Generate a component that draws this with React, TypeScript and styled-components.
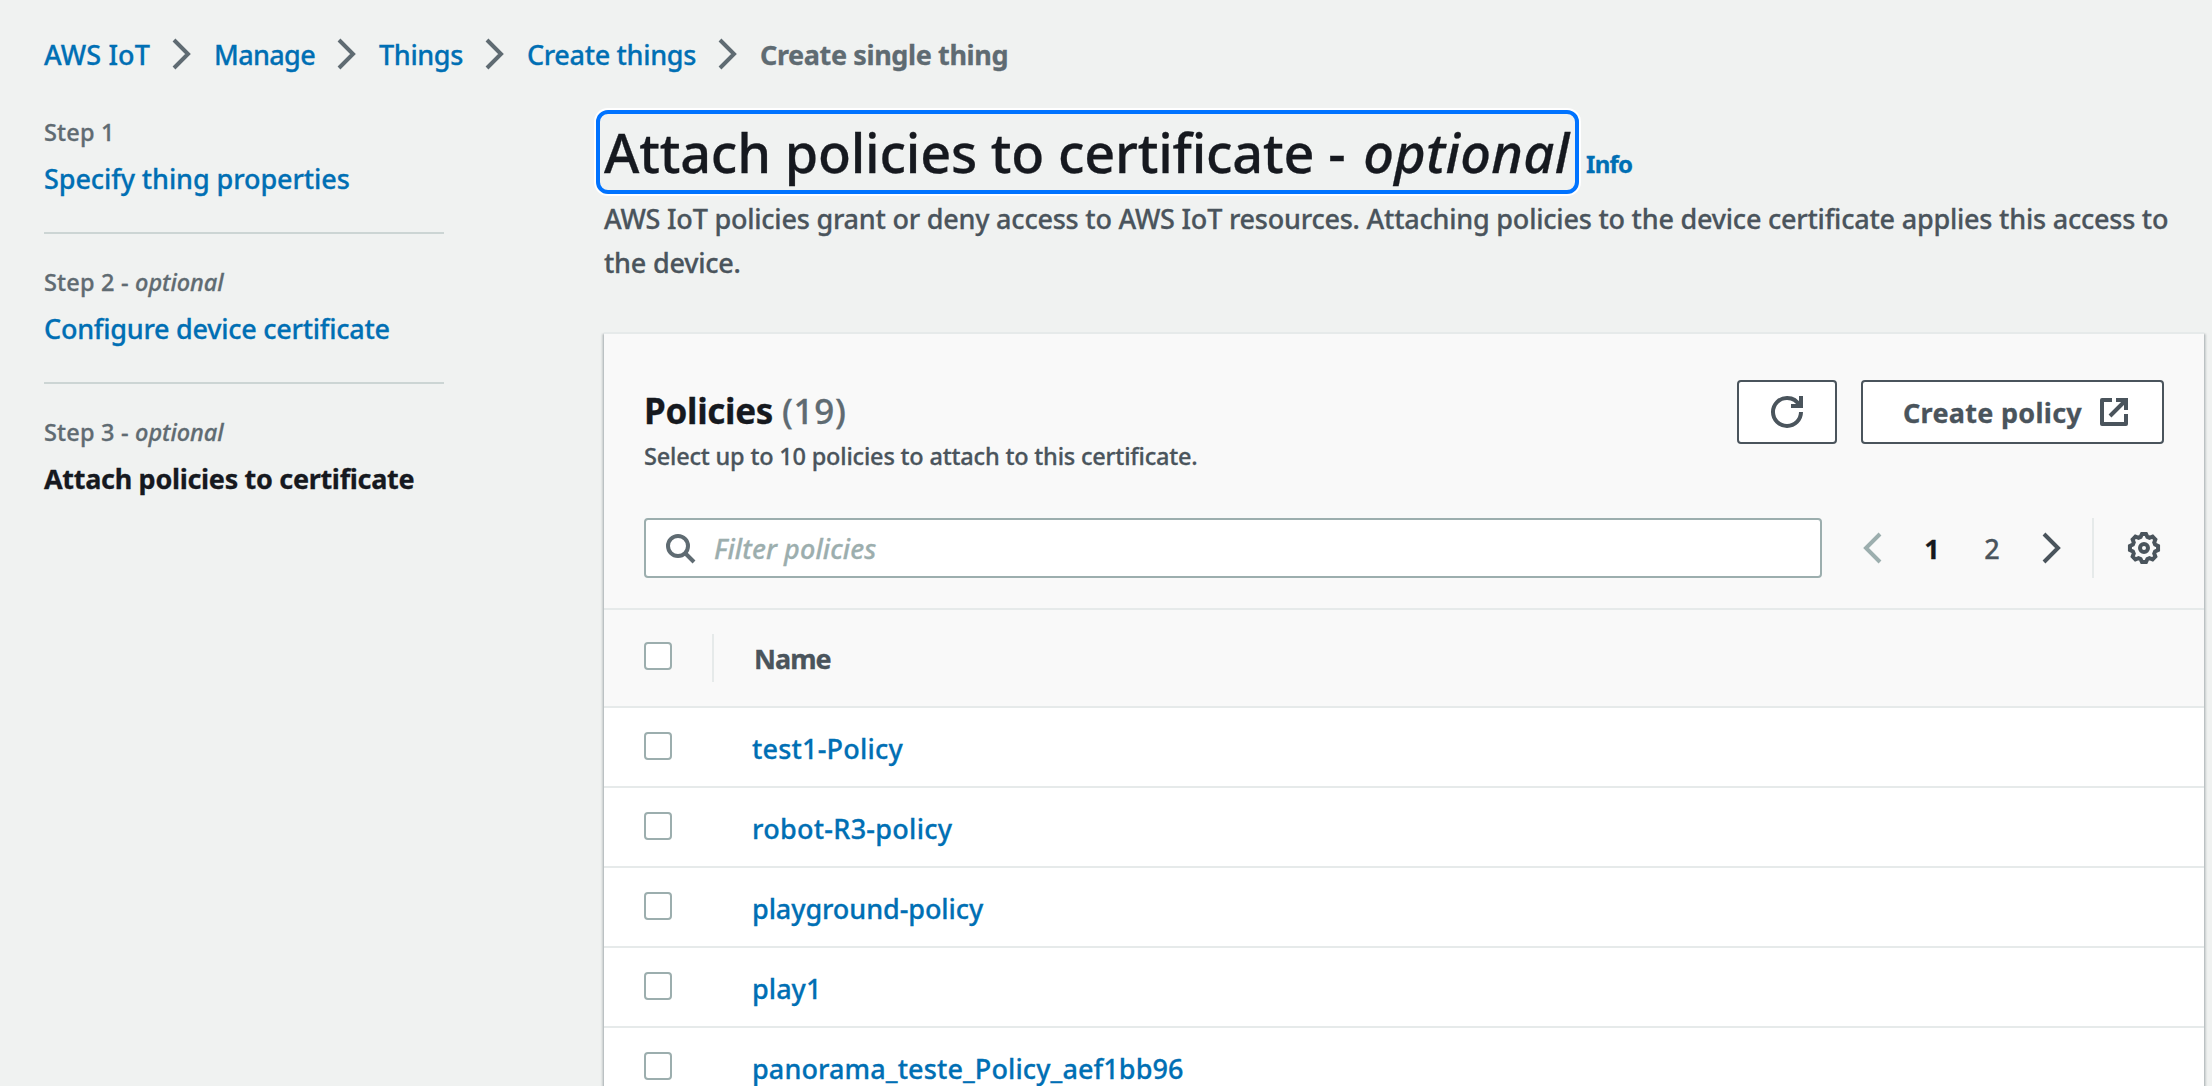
import React from 'react';
import styled, { createGlobalStyle } from 'styled-components';

const color = {
  page: '#f0f2f1',
  link: '#006fb4',
  ink: '#16191f',
  body: '#4a545c',
  muted: '#5f6b72',
  field: '#9caeae',
  line: '#e6eaea',
  rule: '#ccd5d4',
  panel: '#f9f9f9',
  focus: '#0073ff',
};

const GlobalStyle = createGlobalStyle`
  *, *::before, *::after { box-sizing: border-box; }
  body {
    margin: 0;
    background: ${color.page};
    color: ${color.body};
    font-family: "Noto Sans", "Open Sans", sans-serif;
    font-size: 27px;
    font-weight: 500;
    line-height: 44px;
    -webkit-text-stroke: 0.3px currentColor;
  }
  a { text-decoration: none; }
  h1, h2, p, ol { margin: 0; padding: 0; }
`;

type Tracking = { $track?: number };

const Page = styled.div`
  height: 1086px;
  overflow: hidden;
  padding: 32px 8px 0 44px;
`;

const Breadcrumbs = styled.nav`
  display: flex;
  align-items: center;
  gap: 16px;
  height: 44px;
  white-space: nowrap;
`;

const Link = styled.a<Tracking>`
  padding-top: 2px;
  color: ${color.link};
  letter-spacing: ${(p) => p.$track ?? 0}px;
  white-space: nowrap;
`;

const CurrentCrumb = styled.span`
  padding-top: 2px;
  color: ${color.muted};
  font-weight: 700;
  letter-spacing: -0.38px;
`;

const Icon = styled.svg<{ $color?: string }>`
  flex: none;
  display: block;
  width: 32px;
  height: 32px;
  overflow: visible;
  fill: none;
  stroke: ${(p) => p.$color ?? color.body};
  stroke-width: 2;
`;

const Layout = styled.div`
  display: grid;
  grid-template-columns: 400px 1600px;
  column-gap: 160px;
  margin-top: 34px;
`;

const Steps = styled.ol`
  list-style: none;
  padding-top: 4px;
`;

const Step = styled.li`
  display: flex;
  flex-direction: column;
  gap: 5px;
  padding-bottom: 31px;

  & + & {
    border-top: 2px solid ${color.rule};
    padding-top: 30px;
  }
`;

const StepLabel = styled.span`
  color: ${color.muted};
  font-size: 23.5px;
  line-height: 36px;
  letter-spacing: 0.2px;

  em { letter-spacing: -0.05px; }
`;

const CurrentStep = styled.span`
  padding-top: 2px;
  color: ${color.ink};
  font-weight: 700;
  letter-spacing: -0.31px;
  white-space: nowrap;
`;

const TitleRow = styled.div`
  display: flex;
  align-items: baseline;
  gap: 7px;
  margin-left: -8px;
`;

const Title = styled.h1`
  width: 983px;
  height: 84px;
  padding: 0 4px;
  border: 4px solid ${color.focus};
  border-radius: 12px;
  box-shadow: 0 0 0 2px #fff;
  color: ${color.ink};
  font-size: 54px;
  font-weight: 470;
  line-height: 76px;
  letter-spacing: -0.2px;
  white-space: nowrap;

  em {
    margin-left: 4px;
    letter-spacing: 0.3px;
  }
`;

const InfoLink = styled.a`
  color: ${color.link};
  font-size: 24px;
  font-weight: 700;
  letter-spacing: -0.7px;
`;

const Description = styled.p`
  padding-top: 3px;
  letter-spacing: -0.218px;
`;

const Panel = styled.section`
  margin-top: 47px;
  height: 800px;
  border-top: 2px solid ${color.line};
  background: #fff;
  box-shadow:
    0 2px 2px 0 rgba(0, 28, 36, 0.3),
    2px 2px 2px 0 rgba(0, 28, 36, 0.15),
    -2px 2px 2px 0 rgba(0, 28, 36, 0.15);
`;

const PanelHeader = styled.header`
  padding: 46px 40px 30px;
  border-bottom: 2px solid ${color.line};
  background: ${color.panel};
`;

const HeadingRow = styled.div`
  display: flex;
  justify-content: space-between;
  align-items: flex-start;
`;

const HeadingText = styled.div`
  padding-top: 9px;
`;

const Heading = styled.h2`
  color: ${color.ink};
  font-size: 35px;
  font-weight: 700;
  line-height: 44px;
  letter-spacing: -0.3px;
`;

const Count = styled.span`
  color: ${color.muted};
  font-weight: 500;
  letter-spacing: 0.7px;
`;

const SubHeading = styled.p`
  margin-top: 5px;
  font-size: 23.5px;
  line-height: 36px;
  letter-spacing: -0.19px;
`;

const Actions = styled.div`
  display: flex;
  gap: 24px;
`;

const Button = styled.button<{ $wide?: boolean }>`
  display: flex;
  align-items: center;
  justify-content: ${(p) => (p.$wide ? 'flex-start' : 'center')};
  gap: 16px;
  width: ${(p) => (p.$wide ? 303 : 100)}px;
  height: 64px;
  padding: ${(p) => (p.$wide ? '0 0 0 40px' : '0')};
  border: 2px solid ${color.body};
  border-radius: 4px;
  background: #fff;
  color: ${color.body};
  font: inherit;
  font-weight: 700;
  letter-spacing: 0.28px;
  white-space: nowrap;
`;

const ButtonLabel = styled.span`
  padding-top: 2px;
`;

const Toolbar = styled.div`
  display: flex;
  align-items: center;
  height: 60px;
  margin-top: 44px;
`;

const SearchBox = styled.label`
  display: flex;
  align-items: center;
  gap: 18px;
  width: 1178px;
  height: 60px;
  padding-left: 18px;
  border: 2px solid ${color.field};
  border-radius: 4px;
  background: #fff;
`;

const SearchInput = styled.input`
  flex: 1;
  min-width: 0;
  height: 44px;
  padding: 1px 0 0;
  border: 0;
  outline: 0;
  background: transparent;
  font: inherit;

  &::placeholder {
    color: ${color.field};
    font-style: italic;
    font-weight: 500;
    letter-spacing: 0.1px;
    opacity: 1;
  }
`;

const Pagination = styled.div`
  display: flex;
  margin-left: 20px;
`;

const PageArrow = styled.span`
  display: flex;
  align-items: center;
  justify-content: center;
  width: 60px;
  height: 44px;
`;

const PageNumber = styled(PageArrow)<{ $current?: boolean }>`
  padding-top: 2px;
  color: ${(p) => (p.$current ? color.ink : color.body)};
  font-weight: ${(p) => (p.$current ? 700 : 500)};
`;

const Preferences = styled.div`
  display: flex;
  align-items: center;
  height: 60px;
  margin-left: 10px;
  padding-left: 34px;
  border-left: 2px solid ${color.line};
`;

const ColumnHeader = styled.div`
  display: flex;
  align-items: flex-start;
  height: 98px;
  padding: 24px 40px 0;
  border-bottom: 2px solid ${color.line};
  background: ${color.panel};
`;

const ColumnName = styled.div`
  height: 48px;
  margin-left: 40px;
  padding: 3px 0 0 40px;
  border-left: 2px solid ${color.line};
  font-weight: 700;
  letter-spacing: -0.95px;
`;

const Row = styled.div`
  display: flex;
  align-items: flex-start;
  gap: 80px;
  height: 80px;
  padding: 17px 40px 0;
  border-bottom: 2px solid ${color.line};
`;

const Checkbox = styled.span<{ $offset: number }>`
  flex: none;
  width: 28px;
  height: 28px;
  margin-top: ${(p) => p.$offset}px;
  border: 2px solid ${color.field};
  border-radius: 4px;
  background: #fff;
`;

const Chevron = () => (
  <Icon viewBox="0 0 16 16" $color={color.muted}>
    <path d="m4 1 7 7-7 7" />
  </Icon>
);

const GEAR_POINTS = Array.from({ length: 8 }, (_, i) => i * 45)
  .flatMap((a) => [
    [a - 8, 7.1],
    [a + 8, 7.1],
    [a + 17, 5.8],
    [a + 28, 5.8],
  ])
  .map(([deg, r]) => {
    const t = (deg * Math.PI) / 180;
    return `${(8 + r * Math.cos(t)).toFixed(2)},${(8 + r * Math.sin(t)).toFixed(2)}`;
  })
  .join(' ');

const crumbs = [
  { label: 'AWS IoT', track: 0.13 },
  { label: 'Manage', track: -0.64 },
  { label: 'Things', track: -0.38 },
  { label: 'Create things', track: -0.32 },
];

const policies = [
  { name: 'test1-Policy', track: 0.2 },
  { name: 'robot-R3-policy', track: 0.28 },
  { name: 'playground-policy', track: -0.08 },
  { name: 'play1', track: 0.05 },
  { name: 'panorama_teste_Policy_aef1bb96', track: 0.11 },
];

export default function App() {
  return (
    <>
      <GlobalStyle />
      <Page>
        <Breadcrumbs>
          {crumbs.map((c) => (
            <React.Fragment key={c.label}>
              <Link $track={c.track}>{c.label}</Link>
              <Chevron />
            </React.Fragment>
          ))}
          <CurrentCrumb>Create single thing</CurrentCrumb>
        </Breadcrumbs>

        <Layout>
          <Steps>
            <Step>
              <StepLabel>Step 1</StepLabel>
              <Link $track={-0.09}>Specify thing properties</Link>
            </Step>
            <Step>
              <StepLabel>Step 2 - <em>optional</em></StepLabel>
              <Link $track={-0.25}>Configure device certificate</Link>
            </Step>
            <Step>
              <StepLabel>Step 3 - <em>optional</em></StepLabel>
              <CurrentStep>Attach policies to certificate</CurrentStep>
            </Step>
          </Steps>

          <main>
            <TitleRow>
              <Title>Attach policies to certificate - <em>optional</em></Title>
              <InfoLink>Info</InfoLink>
            </TitleRow>
            <Description>
              AWS IoT policies grant or deny access to AWS IoT resources. Attaching policies to the device
              certificate applies this access to
              <br />
              the device.
            </Description>

            <Panel>
              <PanelHeader>
                <HeadingRow>
                  <HeadingText>
                    <Heading>Policies <Count>(19)</Count></Heading>
                    <SubHeading>Select up to 10 policies to attach to this certificate.</SubHeading>
                  </HeadingText>
                  <Actions>
                    <Button aria-label="Refresh">
                      <Icon viewBox="0 0 16 16">
                        <path d="M10 5h5V0" />
                        <path d="M15 8a6.957 6.957 0 0 1-7 7 6.957 6.957 0 0 1-7-7 6.957 6.957 0 0 1 7-7 6.87 6.87 0 0 1 6.3 4" />
                      </Icon>
                    </Button>
                    <Button $wide>
                      <ButtonLabel>Create policy</ButtonLabel>
                      <Icon viewBox="0 0 16 16">
                        <path d="M7 2H2v12h12V9" strokeLinejoin="round" />
                        <path d="M9 2h5v5M14 2l-8 8" />
                      </Icon>
                    </Button>
                  </Actions>
                </HeadingRow>
                <Toolbar>
                  <SearchBox>
                    <Icon viewBox="0 0 16 16" $color={color.muted}>
                      <circle cx="7" cy="7" r="5" />
                      <path d="m15 15-4.5-4.5" />
                    </Icon>
                    <SearchInput placeholder="Filter policies" />
                  </SearchBox>
                  <Pagination>
                    <PageArrow>
                      <Icon viewBox="0 0 16 16" $color={color.field}>
                        <path d="M12 1 5 8l7 7" />
                      </Icon>
                    </PageArrow>
                    <PageNumber $current>1</PageNumber>
                    <PageNumber>2</PageNumber>
                    <PageArrow>
                      <Icon viewBox="0 0 16 16">
                        <path d="m4 1 7 7-7 7" />
                      </Icon>
                    </PageArrow>
                  </Pagination>
                  <Preferences>
                    <Icon viewBox="0 0 16 16">
                      <polygon points={GEAR_POINTS} />
                      <circle cx="8" cy="8" r="2" />
                    </Icon>
                  </Preferences>
                </Toolbar>
              </PanelHeader>

              <ColumnHeader>
                <Checkbox $offset={8} />
                <ColumnName>Name</ColumnName>
              </ColumnHeader>
              {policies.map((p) => (
                <Row key={p.name}>
                  <Checkbox $offset={7} />
                  <Link $track={p.track}>{p.name}</Link>
                </Row>
              ))}
            </Panel>
          </main>
        </Layout>
      </Page>
    </>
  );
}
